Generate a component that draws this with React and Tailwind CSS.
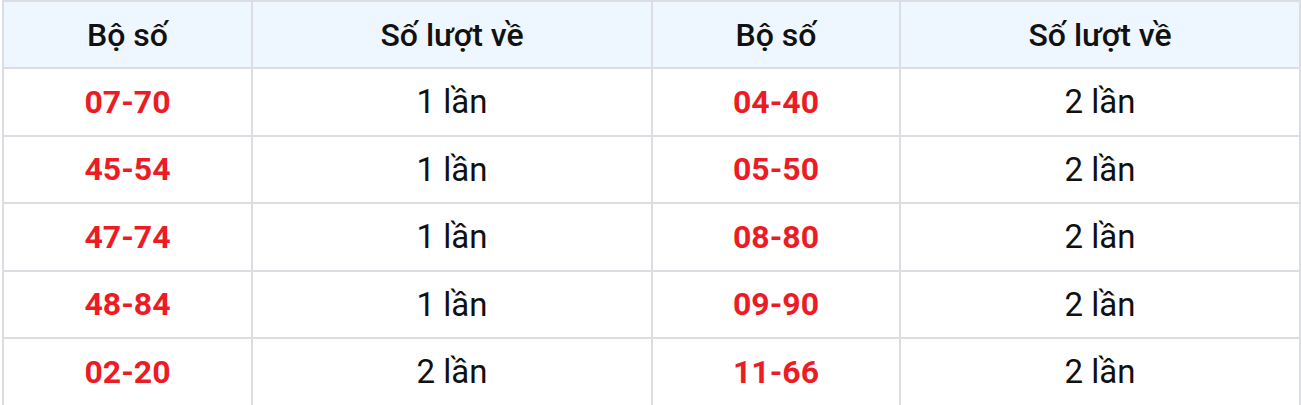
import React from "react";

const rows = [
  ["07-70", "1 lần", "04-40", "2 lần"],
  ["45-54", "1 lần", "05-50", "2 lần"],
  ["47-74", "1 lần", "08-80", "2 lần"],
  ["48-84", "1 lần", "09-90", "2 lần"],
  ["02-20", "2 lần", "11-66", "2 lần"],
];

export default function App() {
  const font = { fontFamily: "Roboto, 'Noto Sans', sans-serif" };
  return (
    <div className="w-[1301px] h-[405px] bg-white pl-[2px]" style={font}>
      <table className="w-[1297px] border-collapse border-2 border-[#dcdde2] table-fixed">
        <colgroup>
          <col className="w-[249px]" />
          <col className="w-[400px]" />
          <col className="w-[248px]" />
          <col className="w-[400px]" />
        </colgroup>
        <thead>
          <tr className="h-[67px] bg-[#eef6ff]">
            {["Bộ số", "Số lượt về", "Bộ số", "Số lượt về"].map((h, i) => (
              <th key={i} className="border-2 border-[#dcdde2] text-center font-medium text-[32px] text-[#111111] p-0">
                {h}
              </th>
            ))}
          </tr>
        </thead>
        <tbody>
          {rows.map((r, i) => (
            <tr key={i} className="h-[67.5px]">
              <td className="border-2 border-[#dcdde2] text-center font-bold text-[32px] text-[#ed1c24] p-0">{r[0]}</td>
              <td className="border-2 border-[#dcdde2] text-center text-[33px] text-[#111111] p-0">{r[1]}</td>
              <td className="border-2 border-[#dcdde2] text-center font-bold text-[32px] text-[#ed1c24] p-0">{r[2]}</td>
              <td className="border-2 border-[#dcdde2] text-center text-[33px] text-[#111111] p-0">{r[3]}</td>
            </tr>
          ))}
        </tbody>
      </table>
    </div>
  );
}
